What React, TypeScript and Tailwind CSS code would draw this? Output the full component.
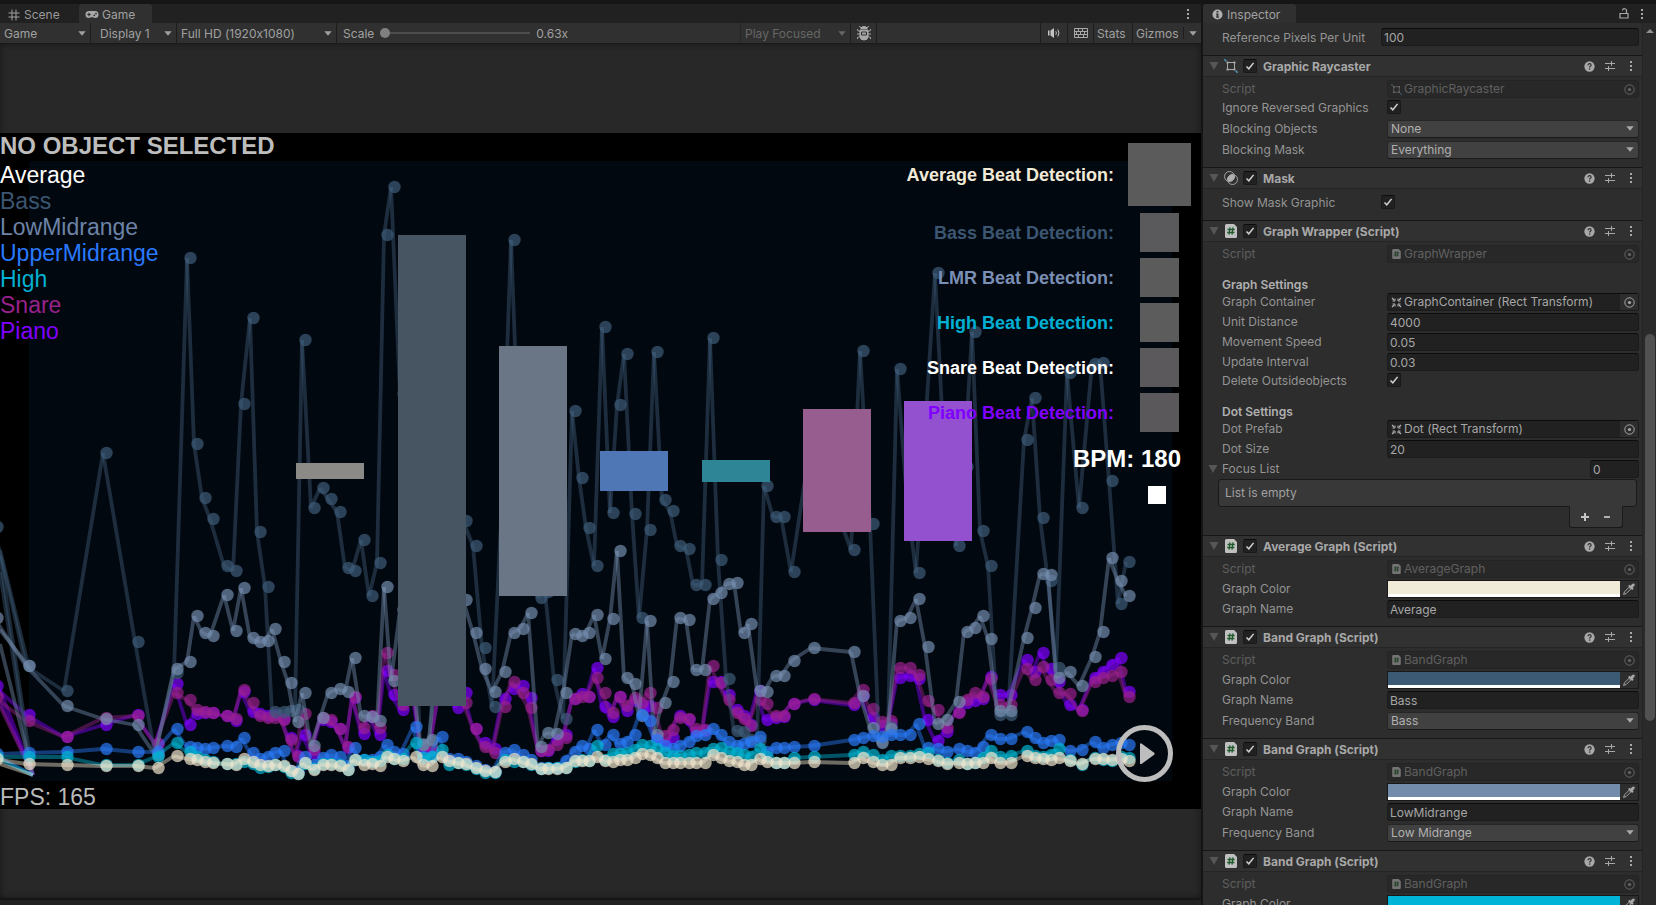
import React, { useId } from "react";

/* ------------------------------------------------------------------ data */

const X = [
  -3, 29, 67, 106, 138, 158, 177, 190, 197, 205, 213, 227, 236, 244, 253, 260, 268, 275, 284, 291, 298, 305, 314, 323,
  331, 340, 348, 355, 364, 372, 380, 387, 394, 403, 416, 423, 432, 442, 449, 458, 466, 476, 485, 495, 505, 514, 523,
  531, 541, 548, 557, 566, 575, 582, 589, 597, 605, 613, 620, 627, 635, 642, 650, 657, 665, 673, 680, 689, 696, 705,
  713, 721, 729, 737, 744, 751, 760, 767, 776, 784, 794, 814, 854, 863, 873, 882, 891, 900, 910, 919, 928, 938, 947,
  959, 967, 975, 983, 991, 1000, 1011, 1027, 1035, 1043, 1051, 1059, 1070, 1082, 1095, 1103, 1112, 1121, 1129,
];

type Series = { name: string; color: string; label: string; y: number[]; tail: number[][] };

const SERIES: Record<string, Series> = {
  piano: {
    name: "Piano",
    color: "#8000ff",
    label: "#8000ff",
    tail: [[0, 690, 33, 775], [0, 702, 33, 775]],
    y: [
      686, 715, 737, 725, 715, 744, 684, 725, 714, 713, 713, 716, 721, 692, 712, 714, 716, 715, 719, 738, 756, 735, 754,
      720, 722, 729, 748, 698, 734, 717, 735, 671, 695, 710, 700, 748, 750, 690, 690, 708, 693, 729, 743, 749, 699, 689,
      686, 698, 751, 751, 740, 735, 699, 694, 697, 668, 707, 717, 697, 711, 701, 705, 706, 738, 744, 738, 716, 720, 732,
      731, 682, 682, 695, 710, 716, 725, 691, 720, 718, 717, 704, 700, 705, 696, 718, 726, 724, 678, 676, 679, 720, 741,
      732, 712, 703, 701, 699, 677, 695, 695, 660, 672, 653, 669, 682, 705, 710, 678, 672, 665, 658, 692,
    ],
  },
  snare: {
    name: "Snare",
    color: "#98218c",
    label: "#98218c",
    tail: [[0, 706, 33, 775]],
    y: [
      697, 721, 737, 718, 716, 744, 693, 700, 710, 712, 713, 716, 719, 690, 703, 716, 718, 718, 720, 740, 757, 714, 750,
      718, 720, 729, 747, 697, 728, 716, 728, 653, 675, 705, 690, 745, 749, 690, 690, 700, 703, 729, 747, 753, 707, 682,
      693, 708, 751, 750, 745, 738, 699, 697, 697, 678, 693, 713, 697, 706, 698, 703, 693, 708, 736, 730, 718, 719, 729,
      730, 666, 683, 700, 713, 719, 726, 700, 704, 716, 716, 704, 699, 703, 690, 709, 722, 721, 668, 668, 675, 701, 710,
      728, 713, 700, 693, 697, 679, 705, 705, 669, 680, 667, 680, 693, 694, 711, 682, 678, 676, 672, 697,
    ],
  },
  bass: {
    name: "Bass",
    color: "#3d5b77",
    label: "#3b5672",
    tail: [[0, 550, 29, 668], [0, 556, 31, 764], [0, 572, 31, 774]],
    y: [
      527, 666, 691, 453, 642, 755, 673, 258, 444, 498, 519, 566, 571, 404, 318, 532, 587, 712, 712, 711, 710, 340, 508,
      488, 499, 512, 568, 571, 540, 596, 563, 235, 187, 394, 560, 744, 742, 600, 560, 540, 521, 546, 648, 707, 500, 240,
      480, 560, 598, 592, 680, 719, 411, 478, 528, 566, 327, 513, 405, 354, 514, 618, 530, 352, 500, 511, 546, 549, 585,
      585, 338, 560, 679, 731, 732, 740, 741, 486, 517, 517, 572, 440, 550, 351, 524, 742, 727, 369, 500, 573, 430, 273,
      450, 546, 467, 332, 531, 566, 715, 715, 440, 398, 518, 581, 668, 373, 508, 364, 363, 481, 604, 562,
    ],
  },
  low: {
    name: "LowMidrange",
    color: "#738cad",
    label: "#6c83a6",
    tail: [[0, 630, 30, 668], [0, 644, 33, 775]],
    y: [
      618, 666, 706, 719, 725, 755, 669, 662, 616, 633, 636, 595, 631, 588, 638, 642, 641, 629, 662, 683, 722, 693, 746,
      718, 693, 689, 692, 658, 716, 717, 721, 587, 681, 610, 680, 745, 740, 640, 600, 590, 600, 633, 669, 692, 672, 633,
      629, 613, 747, 733, 734, 693, 634, 636, 633, 615, 659, 619, 551, 678, 684, 716, 621, 735, 703, 682, 618, 620, 670,
      670, 599, 593, 584, 583, 633, 624, 691, 692, 676, 676, 661, 648, 652, 696, 728, 743, 729, 621, 618, 599, 647, 724,
      720, 702, 632, 628, 616, 639, 711, 711, 638, 608, 574, 575, 678, 672, 686, 657, 632, 558, 581, 596,
    ],
  },
  upper: {
    name: "UpperMidrange",
    color: "#2979f7",
    label: "#2979ff",
    tail: [[0, 758, 33, 775]],
    y: [
      754, 753, 752, 749, 752, 752, 729, 747, 748, 749, 748, 746, 747, 738, 753, 759, 757, 753, 751, 771, 772, 757, 765,
      758, 755, 757, 766, 748, 760, 760, 757, 745, 752, 754, 727, 757, 757, 737, 759, 759, 762, 766, 770, 772, 753, 750,
      755, 760, 768, 768, 768, 761, 752, 746, 749, 730, 745, 735, 744, 742, 735, 715, 721, 740, 746, 749, 746, 742, 736,
      735, 729, 735, 742, 746, 744, 742, 737, 752, 748, 748, 747, 746, 740, 738, 736, 737, 735, 735, 735, 724, 748, 749,
      752, 749, 751, 753, 747, 735, 739, 739, 732, 738, 743, 741, 740, 751, 750, 742, 748, 745, 743, 745,
    ],
  },
  high: {
    name: "High",
    color: "#00b4d0",
    label: "#00b0d4",
    tail: [[0, 760, 33, 775]],
    y: [
      757, 757, 757, 765, 765, 757, 743, 752, 757, 760, 762, 764, 764, 762, 764, 768, 767, 765, 767, 773, 774, 764, 769,
      764, 764, 765, 770, 760, 760, 762, 761, 755, 759, 759, 743, 758, 757, 750, 765, 763, 765, 769, 773, 773, 760, 762,
      762, 765, 769, 768, 768, 768, 762, 760, 761, 746, 760, 754, 754, 753, 750, 745, 746, 749, 753, 756, 756, 755, 753,
      753, 749, 748, 752, 753, 755, 757, 749, 757, 763, 763, 758, 757, 755, 752, 755, 760, 756, 756, 756, 754, 753, 760,
      763, 760, 764, 763, 758, 751, 757, 756, 751, 756, 757, 755, 749, 760, 765, 758, 760, 761, 757, 758,
    ],
  },
  average: {
    name: "Average",
    color: "#efe4cc",
    label: "#ffffff",
    tail: [[0, 764, 33, 775]],
    y: [
      759, 764, 765, 766, 766, 768, 756, 759, 760, 762, 763, 764, 765, 759, 762, 765, 766, 765, 766, 771, 774, 763, 770,
      765, 765, 766, 770, 760, 765, 764, 766, 757, 759, 761, 757, 765, 766, 757, 761, 763, 764, 768, 771, 772, 762, 759,
      762, 764, 769, 769, 769, 768, 761, 761, 761, 757, 761, 762, 760, 760, 758, 754, 755, 758, 763, 763, 763, 763, 763,
      763, 755, 758, 761, 762, 765, 765, 759, 762, 763, 763, 763, 762, 763, 758, 762, 765, 765, 758, 758, 757, 759, 761,
      764, 763, 764, 763, 763, 758, 763, 763, 756, 758, 759, 760, 758, 761, 764, 759, 759, 760, 759, 761,
    ],
  },
};

const DRAW_ORDER = ["piano", "snare", "bass", "low", "upper", "high", "average"];
const LEGEND = ["average", "bass", "low", "upper", "high", "snare", "piano"];

const BARS = [
  { x: 296, y: 463, h: 16, fill: "#8b8a86" },
  { x: 398, y: 235, h: 471, fill: "#465561" },
  { x: 499, y: 346, h: 250, fill: "#6a7585" },
  { x: 600, y: 451, h: 40, fill: "#4f77b5" },
  { x: 702, y: 460, h: 22, fill: "#2e8596" },
  { x: 803, y: 409, h: 123, fill: "#965d8e" },
  { x: 904, y: 401, h: 140, fill: "#9351d0" },
];

const BEATS = [
  { text: "Bass Beat Detection:", color: "#3b5672", box: "#5a5a5c" },
  { text: "LMR Beat Detection:", color: "#7a8fb5", box: "#5b5b5b" },
  { text: "High Beat Detection:", color: "#00b0d4", box: "#5c5c5c" },
  { text: "Snare Beat Detection:", color: "#ffffff", box: "#5c595c" },
  { text: "Piano Beat Detection:", color: "#8000ff", box: "#5b585c" },
];

/* ----------------------------------------------------------------- icons */

function Dots({ className = "" }: { className?: string }) {
  return (
    <svg viewBox="0 0 4 12" className={`h-3 w-1 fill-[#a8a8a8] ${className}`}>
      <rect x="1" y="1" width="2" height="2" />
      <rect x="1" y="5" width="2" height="2" />
      <rect x="1" y="9" width="2" height="2" />
    </svg>
  );
}

function Caret({ className = "" }: { className?: string }) {
  return (
    <svg viewBox="0 0 8 5" className={`h-[5px] w-2 ${className}`}>
      <path d="M0.3 0.3h7.4L4 4.8z" fill="currentColor" />
    </svg>
  );
}

function Foldout() {
  return (
    <svg viewBox="0 0 10 8" className="h-2 w-[10px] fill-[#565656]">
      <path d="M0.5 0h9L5 8z" />
    </svg>
  );
}

function SceneIcon() {
  return (
    <svg viewBox="0 0 12 12" className="size-3 stroke-[#a0a0a0]" fill="none">
      <path d="M4 0.5v11M8 0.5v11M0.5 4h11M0.5 8h11" />
    </svg>
  );
}

function GamepadIcon() {
  return (
    <svg viewBox="0 0 14 9" className="h-[9px] w-[14px]">
      <path d="M4 1h6a3.5 3.5 0 0 1 0 7c-1.500 0-1.800-1-3-1s-1.500 1-3 1a3.500 3.500 0 0 1 0-7z" fill="#a8a8a8" />
      <path d="M4 2.700v3.600M2.200 4.500h3.600" stroke="#303030" strokeWidth="1.200" />
      <circle cx="9.300" cy="5.300" r="0.900" fill="#303030" />
      <circle cx="11" cy="3.600" r="0.900" fill="#303030" />
    </svg>
  );
}

function BugIcon() {
  return (
    <svg viewBox="0 0 16 16" className="size-4" fill="none" stroke="#a8a8a8">
      <path d="M5 3.500 3.500 1M11 3.500 12.500 1M4 6.500 1.500 5.500V4M12 6.500l2.500-1V4M4 9H1M12 9h3M4 11.500l-2.500 1V14M12 11.500l2.500 1V14" />
      <path d="M5 3.500a3 2 0 0 1 6 0z" fill="#a8a8a8" />
      <path d="M4 5h8v6.500a4 3.500 0 0 1-8 0z" fill="#a8a8a8" />
      <path d="M5.500 7h5v3h-5z" stroke="#303030" />
    </svg>
  );
}

function SpeakerIcon() {
  return (
    <svg viewBox="0 0 14 12" className="h-3 w-[14px]" fill="none" stroke="#c4c4c4">
      <path d="M1 3.500h1.500v5H1zM3.500 3.500 7 1v10L3.500 8.500z" fill="#c4c4c4" stroke="none" />
      <path d="M8.800 4.200q1.200 1.800 0 3.600M10.800 2.500q2.400 3.500 0 7" />
    </svg>
  );
}

function KeyboardIcon() {
  return (
    <svg viewBox="0 0 14 12" className="h-3 w-[14px]" fill="none" stroke="#a8a8a8">
      <path d="M0.500 1.500h13v9H0.500zM0.500 4.500h13M0.500 7.500h13M4.500 1.500v3M8.500 1.500v3M2.500 4.500v3M6.500 4.500v3M10.500 4.500v3M4.500 7.500v3M9.500 7.500v3" />
    </svg>
  );
}

function InfoIcon() {
  return (
    <svg viewBox="0 0 12 12" className="size-[11px]">
      <circle cx="6" cy="6" r="5.500" fill="#b0b0b0" />
      <path d="M5 2.200h2v1.600H5zM4.500 5H7v3.500h.6V9.500H4.500V8.500H5V6h-.5z" fill="#303030" />
    </svg>
  );
}

function LockIcon() {
  return (
    <svg viewBox="0 0 10 11" className="h-[11px] w-[10px]" fill="none" stroke="#a8a8a8">
      <path d="M1 5.500h8v4.500H1zM7.500 5.500V3a2 2 0 0 0-4-.500" strokeWidth="1.200" />
    </svg>
  );
}

function HelpIcon() {
  return (
    <svg viewBox="0 0 12 12" className="size-[11px]">
      <circle cx="6" cy="6" r="5.600" fill="#a8a8a8" />
      <path d="M4.300 4.700c0-2.400 3.500-2.200 3.500-.200 0 1.300-1.700 1.300-1.700 2.600" fill="none" stroke="#2f2f2f" strokeWidth="1.300" />
      <rect x="5.400" y="8.100" width="1.400" height="1.400" fill="#2f2f2f" />
    </svg>
  );
}

function PresetIcon() {
  return (
    <svg viewBox="0 0 12 12" className="size-3" fill="none" stroke="#a8a8a8">
      <path d="M1 3.500h6M8 3.500h3M7.500 1v5M1 8.500h3M5 8.500h6M4.500 6v5" />
    </svg>
  );
}

function RaycasterIcon({ small = false }: { small?: boolean }) {
  return (
    <svg viewBox="0 0 14 14" className={small ? "size-[11px] opacity-50" : "size-[14px]"} fill="none" stroke="#a8a8a8">
      <path d="M3 3.500h8M3 10.500h8M3.500 3v8M10.500 3v8" />
      <path d="M2.500 2.500h2v2h-2zM9.500 2.500h2v2h-2zM2.500 9.500h2v2h-2zM9.500 9.500h2v2h-2z" fill="#a8a8a8" stroke="none" />
      <path d="M0.300 0.300l2 2M11.700 11.700l2 2" stroke="#4c9cc0" strokeWidth="1.500" />
    </svg>
  );
}

function MaskIcon() {
  return (
    <svg viewBox="0 0 14 14" className="size-[14px]">
      <circle cx="5.500" cy="5.500" r="5" fill="none" stroke="#a0a0a0" />
      <circle cx="8.500" cy="8.500" r="5" fill="none" stroke="#a0a0a0" />
      <path d="M3.700 9A5 5 0 0 1 9 3.700 5 5 0 0 1 10.300 5 5 5 0 0 1 5 10.300 5 5 0 0 1 3.700 9z" fill="#b0b0b0" stroke="#b0b0b0" />
    </svg>
  );
}

function ScriptIcon({ small = false }: { small?: boolean }) {
  return (
    <svg viewBox="0 0 12 14" className={small ? "h-[10px] w-[9px] opacity-50" : "h-[14px] w-3"}>
      <path d="M1.500 0H9l3 3v9.500a1.500 1.500 0 0 1-1.500 1.500h-9A1.500 1.500 0 0 1 0 12.500v-11A1.500 1.500 0 0 1 1.500 0z" fill="#c0c0c0" />
      <path d="M5 3.300 4 10.700M8 3.300 7 10.700M2.500 5.500h7.200M2.200 8.500h7.200" stroke="#1f5a2c" strokeWidth="1.300" fill="none" />
    </svg>
  );
}

function RectIcon() {
  return (
    <svg viewBox="0 0 11 11" className="size-[11px]" stroke="#b4b4b4" fill="none">
      <path d="M1 1l2 2M10 1 8 3M1 10l2-2M10 10 8 8" strokeWidth="1.200" />
      <path d="M4 1.500V4H1.500M7 1.500V4h2.500M4 9.500V7H1.500M7 9.500V7h2.500" />
    </svg>
  );
}

function TargetIcon({ dim }: { dim?: boolean }) {
  return (
    <svg viewBox="0 0 11 11" className={dim ? "size-[11px] text-[#666]" : "size-[11px] text-[#a8a8a8]"}>
      <circle cx="5.500" cy="5.500" r="4.700" fill="none" stroke="currentColor" />
      <circle cx="5.500" cy="5.500" r="1.600" fill="currentColor" />
    </svg>
  );
}

function DropperIcon() {
  return (
    <svg viewBox="0 0 12 12" className="size-3">
      <path d="M0.600 11.400 1.500 8.800 6 4.300l1.700 1.700-4.500 4.500z" fill="none" stroke="#a8a8a8" />
      <path d="M5 3 6.500 1.800l1.200 1C9 1.200 10 .200 11.200.800s.400 2.200-1.500 3.700l1 1L9.200 7z" fill="#a8a8a8" />
    </svg>
  );
}

/* -------------------------------------------------------------- controls */

function Check({ id, label }: { id?: string; label?: string }) {
  return (
    <span className="grid size-[14px] shrink-0">
      <input
        id={id}
        type="checkbox"
        defaultChecked
        aria-label={label}
        className="peer col-start-1 row-start-1 size-[14px] appearance-none rounded-[2px] border border-[#191919] border-t-[#0c0c0c] bg-[#212121]"
      />
      <svg
        viewBox="0 0 14 14"
        className="pointer-events-none invisible col-start-1 row-start-1 size-[14px] peer-checked:visible"
        fill="none"
        stroke="#d0d0d0"
        strokeWidth="1.500"
      >
        <path d="M3.500 7.500 5.800 9.800 10.600 3.900" />
      </svg>
    </span>
  );
}

const LABEL = "w-[165px] shrink-0 truncate text-[#949494]";
const FIELD =
  "h-[18px] min-w-0 flex-1 rounded-[3px] border border-[#1b1b1b] border-t-[#0c0c0c] bg-[#212121] px-[2px] text-[#a6a6a6] outline-none";

function TextRow({ label, value }: { label: string; value: string }) {
  const id = useId();
  return (
    <div className="flex h-[18px] items-center">
      <label htmlFor={id} className={LABEL}>{label}</label>
      <input id={id} defaultValue={value} className={FIELD} />
    </div>
  );
}

function CheckRow({ label }: { label: string }) {
  const id = useId();
  return (
    <div className="flex h-[17px] items-start">
      <label htmlFor={id} className={LABEL}>{label}</label>
      <Check id={id} />
    </div>
  );
}

function SelectRow({ label, value }: { label: string; value: string }) {
  const id = useId();
  return (
    <div className="flex h-[19px] items-center">
      <label htmlFor={id} className={LABEL}>{label}</label>
      <div className="grid min-w-0 flex-1 items-center">
        <select
          id={id}
          className="col-start-1 row-start-1 h-[18px] w-full appearance-none rounded-[3px] border border-[#262626] border-b-[#1a1a1a] bg-[#414141] px-[3px] text-[#b0b0b0] outline-none"
        >
          <option>{value}</option>
        </select>
        <Caret className="pointer-events-none col-start-1 row-start-1 mr-[5px] justify-self-end text-[#a8a8a8]" />
      </div>
    </div>
  );
}

function ObjectRow({ label, value, icon, dim }: { label: string; value: string; icon: React.ReactNode; dim?: boolean }) {
  return (
    <div className="flex h-[18px] items-center">
      <span className={dim ? "w-[165px] shrink-0 text-[#5f5f5f]" : LABEL}>{label}</span>
      <div
        className={
          dim
            ? "flex h-[18px] min-w-0 flex-1 items-center rounded-[3px] border border-[#242424] bg-[#282828] text-[#606060]"
            : "flex h-[18px] min-w-0 flex-1 items-center rounded-[3px] border border-[#1b1b1b] border-t-[#0c0c0c] bg-[#212121] text-[#a6a6a6]"
        }
      >
        <span className="flex w-4 justify-center">{icon}</span>
        <span className="min-w-0 flex-1 truncate">{value}</span>
        <button
          disabled={dim}
          aria-label={`Select ${label}`}
          className={`flex h-4 w-[18px] items-center justify-center ${dim ? "" : "bg-[#2d2d2d]"}`}
        >
          <TargetIcon dim={dim} />
        </button>
      </div>
    </div>
  );
}

function ColorRow({ color }: { color: string }) {
  return (
    <div className="flex h-[18px] items-center">
      <span className={LABEL}>Graph Color</span>
      <div className="flex h-[18px] flex-1 items-center border border-[#191919]">
        <button
          aria-label="Graph Color"
          className="h-4 min-w-0 flex-1 border-b-[3px] border-white"
          style={{ backgroundColor: color }}
        />
        <button aria-label="Pick color" className="flex w-[18px] justify-center">
          <DropperIcon />
        </button>
      </div>
    </div>
  );
}

function Heading({ children }: { children: string }) {
  return <h3 className="flex h-[26px] items-end font-semibold leading-[13px] text-[#b0b0b0]">{children}</h3>;
}

function Component({ title, icon, children }: { title: string; icon: React.ReactNode; children?: React.ReactNode }) {
  return (
    <section className="shrink-0 border-t border-[#161616]">
      <header className="flex h-[21px] items-center border-b border-[#252525] bg-[#313131] pl-[6px] pr-[5px]">
        <button aria-label={`Fold ${title}`} className="flex w-[15px]">
          <Foldout />
        </button>
        <span className="flex w-[14px] justify-center">{icon}</span>
        <span className="ml-[5px] flex">
          <Check label={`Enable ${title}`} />
        </span>
        <h2 className="ml-[6px] flex-1 pt-[2px] font-bold text-[#a8a8a8]">{title}</h2>
        <div className="flex items-center gap-[9px]">
          <button aria-label="Help"><HelpIcon /></button>
          <button aria-label="Presets"><PresetIcon /></button>
          <button aria-label="More" className="flex w-[12px] justify-center"><Dots /></button>
        </div>
      </header>
      <div className="flex flex-col gap-[2px] pb-2 pl-[19px] pr-[3px] pt-[3px]">{children}</div>
    </section>
  );
}

function BandGraph({ color, name, band }: { color: string; name: string; band: string }) {
  return (
    <Component title="Band Graph (Script)" icon={<ScriptIcon />}>
      <ObjectRow dim label="Script" value="BandGraph" icon={<ScriptIcon small />} />
      <ColorRow color={color} />
      <TextRow label="Graph Name" value={name} />
      <SelectRow label="Frequency Band" value={band} />
    </Component>
  );
}

/* ------------------------------------------------------------- game view */

function Chart() {
  return (
    <svg viewBox="0 133 1201 676" className="block h-auto w-full">
      <rect x="29" y="161" width="1143" height="620" rx="2" fill="#02080f" />
      {DRAW_ORDER.map((key) => {
        const s = SERIES[key];
        return (
          <g key={key} stroke={s.color} fill={s.color}>
            <g strokeOpacity="0.450" strokeWidth="3.800">
              {s.y.slice(1).map((y, i) => (
                <line key={i} x1={X[i] - 3} y1={s.y[i]} x2={X[i + 1] - 3} y2={y} />
              ))}
              {s.tail.map(([x1, y1, x2, y2], i) => (
                <line key={`t${i}`} x1={x1} y1={y1} x2={x2} y2={y2} />
              ))}
            </g>
            <g stroke="none" fillOpacity="0.700">
              {s.y.map((y, i) => (
                <circle key={i} cx={X[i] + 0.5} cy={y} r="6.200" />
              ))}
            </g>
          </g>
        );
      })}
      {BARS.map((b) => (
        <rect key={b.x} x={b.x} y={b.y} width="68" height={b.h} fill={b.fill} />
      ))}
    </svg>
  );
}

function GameCanvas() {
  return (
    <div className="relative w-full bg-black font-['Liberation_Sans',Arial,sans-serif]">
      <Chart />
      <div className="absolute inset-0 flex justify-between">
        <div className="flex flex-col whitespace-nowrap text-[23px] leading-[26px]">
          <p className="mb-[3px] text-2xl font-bold leading-[26px] text-[#bdbdbd]">NO OBJECT SELECTED</p>
          {LEGEND.map((key) => (
            <p key={key} style={{ color: SERIES[key].label }}>{SERIES[key].name}</p>
          ))}
          <p className="mt-auto leading-[24px] text-[#bababa]">FPS: 165</p>
        </div>
        <div className="flex flex-col items-end whitespace-nowrap pr-[10px] pt-[10px] text-lg font-bold">
          <div className="mb-1 flex items-center gap-[14px] text-[#f0ead6]">
            Average Beat Detection:
            <span className="size-[63px] bg-[#5b5b5b]" />
          </div>
          {BEATS.map((b) => (
            <div key={b.text} className="flex h-[45px] items-center gap-[26px] pr-3" style={{ color: b.color }}>
              {b.text}
              <span className="size-[39px]" style={{ backgroundColor: b.box }} />
            </div>
          ))}
          <p className="mt-2 pr-[10px] text-2xl text-white">BPM: 180</p>
          <span className="mr-[25px] mt-[11px] size-[18px] bg-white" />
        </div>
      </div>
      <button aria-label="Play" className="absolute bottom-[27px] right-7">
        <svg viewBox="0 0 57 57" className="size-[57px]">
          <circle cx="28.500" cy="28.500" r="26" fill="none" stroke="#bdbdbd" strokeWidth="5" />
          <path d="M24 18.500v20.500h1.500L38.500 29.500v-1.500L25.500 18.500z" fill="#bdbdbd" />
        </svg>
      </button>
    </div>
  );
}

function ToolSelect({ label, value, className }: { label: string; value: string; className: string }) {
  return (
    <div className={`grid items-center border-r border-[#1d1d1d] ${className}`}>
      <select
        aria-label={label}
        className="col-start-1 row-start-1 h-5 w-full appearance-none bg-transparent pl-1 pt-[2px] outline-none"
      >
        <option>{value}</option>
      </select>
      <Caret className="pointer-events-none col-start-1 row-start-1 mr-1 justify-self-end" />
    </div>
  );
}

function GamePane() {
  return (
    <main className="flex min-w-0 flex-1 flex-col">
      <div className="flex h-[19px] shrink-0 items-center bg-[#212121]">
        <button className="flex h-full w-[79px] items-center gap-1 pl-2 pt-[2px] text-[#9a9a9a]">
          <SceneIcon />
          Scene
        </button>
        <button className="flex h-full w-[73px] items-center gap-[3px] rounded-t-[3px] bg-[#303030] pl-[6px] pt-[2px] text-[#a0a0a0]">
          <GamepadIcon />
          Game
        </button>
        <button aria-label="Window menu" className="ml-auto mr-[11px]"><Dots /></button>
      </div>
      <div className="flex h-[21px] shrink-0 items-center border-b border-[#1a1a1a] bg-[#303030] text-[#a0a0a0]">
        <ToolSelect label="View" value="Game" className="w-[91px]" />
        <ToolSelect label="Display" value="Display 1" className="w-[86px] pl-[5px]" />
        <ToolSelect label="Resolution" value="Full HD (1920x1080)" className="w-[160px]" />
        <label htmlFor="scale" className="ml-[6px] pt-[2px]">Scale</label>
        <input
          id="scale"
          type="range"
          min="0.63"
          max="5"
          step="0.01"
          defaultValue="0.63"
          className="ml-[6px] h-[10px] w-[150px] appearance-none bg-transparent [&::-webkit-slider-runnable-track]:h-[2px] [&::-webkit-slider-runnable-track]:bg-[#4c4c4c] [&::-webkit-slider-thumb]:mt-[-4px] [&::-webkit-slider-thumb]:size-[10px] [&::-webkit-slider-thumb]:appearance-none [&::-webkit-slider-thumb]:rounded-full [&::-webkit-slider-thumb]:bg-[#808080]"
        />
        <output htmlFor="scale" className="ml-[6px] pt-[2px]">0.63x</output>
        <div className="ml-auto flex h-5 items-center">
          <div className="flex h-5 border-l border-[#262626] text-[#666]">
            <ToolSelect label="Play mode" value="Play Focused" className="w-[110px]" />
          </div>
          <button aria-label="Frame debugger" className="flex h-5 w-[26px] items-center justify-center border-r border-[#1d1d1d]">
            <BugIcon />
          </button>
          <span className="w-[163px]" />
          <button aria-label="Mute" className="flex h-5 w-[27px] items-center justify-center border-l border-[#1d1d1d]">
            <SpeakerIcon />
          </button>
          <button aria-label="Shortcuts" className="flex h-5 w-[26px] items-center justify-center border-l border-[#1d1d1d]">
            <KeyboardIcon />
          </button>
          <button className="flex h-5 w-[39px] items-center border-l border-[#1d1d1d] pl-[3px] pt-[2px]">Stats</button>
          <button className="flex h-5 w-[51px] items-center border-l border-[#1d1d1d] pl-[3px] pt-[2px]">Gizmos</button>
          <button aria-label="Gizmos menu" className="flex h-3 w-[18px] items-center justify-center border-l border-[#1d1d1d]">
            <Caret />
          </button>
        </div>
      </div>
      <div className="flex min-h-0 flex-1 flex-col justify-center bg-[#282828] shadow-[inset_0_0_6px_#161616]">
        <GameCanvas />
      </div>
    </main>
  );
}

/* -------------------------------------------------------------- inspector */

function Inspector() {
  return (
    <aside className="flex w-[453px] shrink-0 flex-col">
      <div className="flex h-[19px] shrink-0 items-center bg-[#212121]">
        <button className="flex h-full w-[93px] items-center gap-1 rounded-t-[3px] bg-[#303030] pl-[9px] pt-[2px] text-[#a0a0a0]">
          <InfoIcon />
          Inspector
        </button>
        <button aria-label="Lock" className="ml-auto"><LockIcon /></button>
        <button aria-label="Inspector menu" className="ml-[11px] mr-3"><Dots /></button>
      </div>
      <div className="flex min-h-0 flex-1 bg-[#2d2d2d]">
        <div className="flex min-w-0 flex-1 flex-col overflow-hidden border-r border-[#242424]">
          <div className="flex h-8 shrink-0 items-start pl-[19px] pr-[3px] pt-[5px]">
            <label htmlFor="ppu" className="w-[159px] shrink-0 pt-[2px] text-[#949494]">Reference Pixels Per Unit</label>
            <input id="ppu" defaultValue="100" className={FIELD} />
          </div>

          <Component title="Graphic Raycaster" icon={<RaycasterIcon />}>
            <ObjectRow dim label="Script" value="GraphicRaycaster" icon={<RaycasterIcon small />} />
            <CheckRow label="Ignore Reversed Graphics" />
            <SelectRow label="Blocking Objects" value="None" />
            <SelectRow label="Blocking Mask" value="Everything" />
          </Component>

          <Component title="Mask" icon={<MaskIcon />}>
            <div className="flex h-5 items-center">
              <label htmlFor="show-mask" className="w-[159px] shrink-0 pt-[2px] text-[#949494]">Show Mask Graphic</label>
              <Check id="show-mask" />
            </div>
          </Component>

          <Component title="Graph Wrapper (Script)" icon={<ScriptIcon />}>
            <ObjectRow dim label="Script" value="GraphWrapper" icon={<ScriptIcon small />} />
            <Heading>Graph Settings</Heading>
            <ObjectRow label="Graph Container" value="GraphContainer (Rect Transform)" icon={<RectIcon />} />
            <TextRow label="Unit Distance" value="4000" />
            <TextRow label="Movement Speed" value="0.05" />
            <TextRow label="Update Interval" value="0.03" />
            <CheckRow label="Delete Outsideobjects" />
            <Heading>Dot Settings</Heading>
            <ObjectRow label="Dot Prefab" value="Dot (Rect Transform)" icon={<RectIcon />} />
            <TextRow label="Dot Size" value="20" />
            <div>
              <div className="-ml-[14px] flex h-[18px] items-center">
                <button aria-label="Fold Focus List" className="flex w-[14px]">
                  <Foldout />
                </button>
                <label htmlFor="focus-count" className="flex-1 text-[#949494]">Focus List</label>
                <input
                  id="focus-count"
                  defaultValue="0"
                  className="h-[18px] w-[49px] rounded-[3px] border border-[#1b1b1b] border-t-[#0c0c0c] bg-[#212121] px-[2px] text-[#a6a6a6] outline-none"
                />
              </div>
              <div className="-ml-1 mr-[2px] mt-px flex h-7 items-center rounded-[3px] border border-[#191919] bg-[#383838] pl-[6px] text-[#a0a0a0]">
                List is empty
              </div>
              <div className="-mt-px mb-[-1px] ml-auto mr-4 flex h-[22px] w-[54px] items-center justify-center gap-[12px] rounded-b-[3px] border border-t-0 border-[#191919] bg-[#383838]">
                <button aria-label="Add">
                  <svg viewBox="0 0 10 10" className="size-[10px]"><path d="M5 1v8M1 5h8" stroke="#c4c4c4" strokeWidth="2" /></svg>
                </button>
                <button aria-label="Remove">
                  <svg viewBox="0 0 10 10" className="size-[10px]"><path d="M2 5h6" stroke="#b0b0b0" strokeWidth="2" /></svg>
                </button>
              </div>
            </div>
          </Component>

          <Component title="Average Graph (Script)" icon={<ScriptIcon />}>
            <ObjectRow dim label="Script" value="AverageGraph" icon={<ScriptIcon small />} />
            <ColorRow color="#f0ead8" />
            <TextRow label="Graph Name" value="Average" />
          </Component>
          <BandGraph color="#3d5a75" name="Bass" band="Bass" />
          <BandGraph color="#738cac" name="LowMidrange" band="Low Midrange" />
          <BandGraph color="#00b4d8" name="High" band="High" />
        </div>
        <div className="flex w-[13px] shrink-0 flex-col items-center bg-[#2a2a2a] pt-[6px]">
          <svg viewBox="0 0 8 4" className="h-1 w-2 fill-[#909090]"><path d="M4 0l4 4H0z" /></svg>
          <span className="mt-[301px] h-[387px] w-[10px] rounded-full bg-[#515151]" />
        </div>
      </div>
    </aside>
  );
}

export default function App() {
  return (
    <div className="flex h-screen flex-col overflow-hidden bg-[#151515] pt-1 font-[Inter,Roboto,sans-serif] text-xs [font-feature-settings:'calt'_0]">
      <div className="flex min-h-0 flex-1 gap-[2px]">
        <div className="flex min-w-0 flex-1 flex-col">
          <GamePane />
          <div className="mt-[2px] h-[5px] shrink-0 bg-[#212121]" />
        </div>
        <Inspector />
      </div>
    </div>
  );
}
